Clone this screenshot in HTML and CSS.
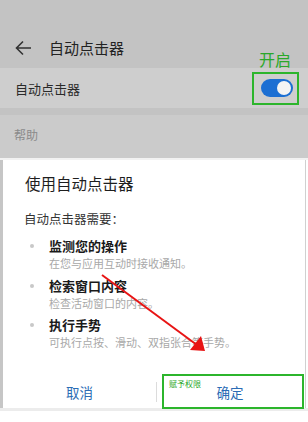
FILE: index.html
```html
<!DOCTYPE html>
<html lang="zh">
<head>
  <meta charset="UTF-8">
  <meta name="viewport" content="width=device-width, initial-scale=1.0">
  <title>自动点击器</title>
  <link rel="stylesheet" href="styles.css">
</head>
<body>
  <div class="screen">
    <!-- Settings page behind the dialog -->
    <div class="settings">
      <div class="header">
        <svg class="back" width="17" height="16" viewBox="0 0 17 16">
          <path d="M16 8H2M8 1.5L1.5 8L8 14.5" fill="none" stroke="#333" stroke-width="1.6"/>
        </svg>
        <span class="page-title">自动点击器</span>
      </div>

      <div class="row">
        <span class="row-label">自动点击器</span>
        <div class="toggle-box">
          <span class="hint-on">开启</span>
          <span class="toggle"><span class="knob"></span></span>
        </div>
      </div>

      <div class="help">帮助</div>
    </div>

    <div class="seam"></div>

    <!-- Permission dialog -->
    <div class="dialog">
      <h2 class="dialog-title">使用自动点击器</h2>
      <p class="intro">自动点击器需要：</p>

      <ul class="perms">
        <li>
          <span class="dot"></span>
          <div>
            <div class="perm-name">监测您的操作</div>
            <div class="perm-desc">在您与应用互动时接收通知。</div>
          </div>
        </li>
        <li>
          <span class="dot"></span>
          <div>
            <div class="perm-name">检索窗口内容</div>
            <div class="perm-desc">检查活动窗口的内容。</div>
          </div>
        </li>
        <li>
          <span class="dot"></span>
          <div>
            <div class="perm-name">执行手势</div>
            <div class="perm-desc">可执行点按、滑动、双指张合等手势。</div>
          </div>
        </li>
      </ul>

      <div class="actions">
        <button class="btn cancel">取消</button>
        <span class="divider"></span>
        <button class="btn ok">
          <span class="hint-grant">赋予权限</span>
          确定
        </button>
      </div>
    </div>

    <div class="bottom-edge"></div>

    <!-- Red annotation arrow -->
    <svg class="arrow" width="308" height="422" viewBox="0 0 308 422">
      <line x1="102" y1="275" x2="197" y2="345" stroke="#e81414" stroke-width="2"/>
      <polygon points="205,351 190,350 201,336" fill="#e81414"/>
    </svg>
  </div>
</body>
</html>
```

FILE: styles.css
```css
/* General */
body {
  margin: 0;
  padding: 0;
  background: #ffffff;
  font-family: "Noto Sans CJK SC", "Noto Sans", sans-serif;
  color: #222;
}

.screen {
  position: relative;
  width: 308px;
  height: 422px;
  overflow: hidden;
  background: #ffffff;
}

/* Settings page (dimmed) */
.settings {
  background: #c3c3c3;
}

.header {
  display: flex;
  align-items: center;
  box-sizing: border-box;
  height: 68px;
  padding: 28px 0 0 15px;
}

.back {
  margin-right: 17px;
}

.page-title {
  font-size: 15px;
  line-height: 40px;
  color: #222;
}

.row {
  display: flex;
  align-items: center;
  justify-content: space-between;
  height: 40px;
  padding: 0 9px 0 15px;
  background: #cecece;
}

.row-label {
  font-size: 13px;
  color: #2a2a2a;
}

.toggle-box {
  position: relative;
  display: flex;
  align-items: center;
  justify-content: center;
  box-sizing: border-box;
  width: 47px;
  height: 33px;
  padding-left: 3px;
  border: 2px solid #2cb52c;
}

.hint-on {
  position: absolute;
  top: -24px;
  left: 5px;
  font-size: 16px;
  line-height: 18px;
  color: #2aa82a;
  white-space: nowrap;
}

.toggle {
  display: flex;
  align-items: center;
  justify-content: flex-end;
  box-sizing: border-box;
  width: 32px;
  height: 18px;
  padding-right: 2px;
  border-radius: 9px;
  background: #1c6fd3;
}

.knob {
  width: 14px;
  height: 14px;
  border-radius: 50%;
  background: #f4f4f4;
}

.help {
  box-sizing: border-box;
  height: 43px;
  margin-top: 7px;
  padding: 11px 0 0 14px;
  background: #cbcbcb;
  font-size: 12px;
  line-height: 18px;
  color: #8a8a8a;
}

.seam {
  height: 2px;
  background: #f2f2f2;
}

/* Dialog */
.dialog {
  box-sizing: border-box;
  height: 248px;
  margin-right: 2px;
  padding-top: 11px;
  border-left: 3px solid #c6c6c6;
  border-right: 1px solid #d0d0d0;
  background: #ffffff;
}

.dialog-title {
  margin: 0;
  padding-left: 22px;
  font-size: 15.5px;
  font-weight: normal;
  line-height: 24px;
  color: #1e1e1e;
}

.intro {
  margin: 14px 0 0;
  padding-left: 21px;
  font-size: 12.5px;
  line-height: 20px;
  color: #333;
}

.perms {
  list-style: none;
  margin: 8px 0 0;
  padding: 0 0 0 27px;
}

.perms li {
  display: flex;
  margin-bottom: 5.5px;
}

.dot {
  flex: none;
  width: 4px;
  height: 4px;
  margin: 7px 15px 0 0;
  border-radius: 50%;
  background: #c8c8c8;
}

.perm-name {
  font-size: 13px;
  font-weight: bold;
  line-height: 18px;
  color: #1a1a1a;
}

.perm-desc {
  font-size: 11px;
  line-height: 16px;
  color: #a8a8a8;
}

.actions {
  display: flex;
  align-items: center;
  height: 35px;
  margin-top: 24px;
}

.btn {
  border: none;
  background: none;
  padding: 0;
  font-family: inherit;
  font-size: 13.5px;
  cursor: pointer;
}

.cancel {
  width: 153px;
  height: 35px;
  color: #2b6cb5;
}

.divider {
  width: 1px;
  height: 20px;
  margin-right: 5px;
  background: #dcdcdc;
}

.ok {
  position: relative;
  box-sizing: border-box;
  width: 142px;
  height: 35px;
  padding-right: 6px;
  border: 2px solid #2cb52c;
  color: #2b6cb5;
}

.hint-grant {
  position: absolute;
  top: 3px;
  left: 5px;
  font-size: 8px;
  line-height: 10px;
  color: #2aa82a;
}

.bottom-edge {
  height: 3px;
  background: #ececec;
}

/* Annotation overlay */
.arrow {
  position: absolute;
  top: 0;
  left: 0;
  pointer-events: none;
}
```
